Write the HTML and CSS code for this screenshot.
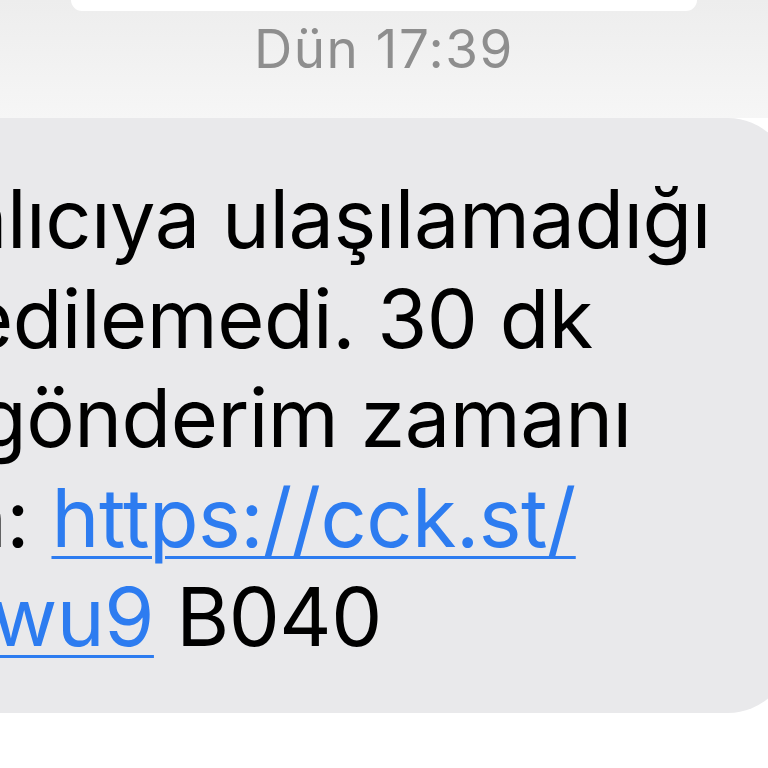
FILE: index.html
```html
<!DOCTYPE html>
<html lang="tr">
<head>
<meta charset="utf-8">
<link rel="stylesheet" href="styles.css">
</head>
<body>
<div class="screen">
  <div class="top">
    <div class="prev-bubble"></div>
    <div class="stamp">Dün 17:39</div>
  </div>
  <div class="bubble">
    <div class="line l1">alıcıya ulaşılamadığı</div>
    <div class="line l2">edilemedi. 30 dk</div>
    <div class="line l3">gönderim zamanı</div>
    <div class="line l4">n: <a class="link">https://cck.st/</a></div>
    <div class="line l5"><a class="link">wu9</a> B040</div>
  </div>
</div>
</body>
</html>
```
FILE: styles.css
```css
html, body {
  margin: 0;
  padding: 0;
}
body {
  width: 768px;
  height: 768px;
  overflow: hidden;
  background: #ffffff;
  font-family: "Inter", "Liberation Sans", sans-serif;
}
.screen {
  width: 768px;
  height: 768px;
  overflow: hidden;
  background: #ffffff;
}
.top {
  height: 118px;
  background: linear-gradient(#ededed, #f6f6f6);
  display: flex;
  flex-direction: column;
  align-items: center;
}
.prev-bubble {
  width: 626px;
  height: 11px;
  background: #ffffff;
  border-radius: 0 0 40px 40px;
}
.stamp {
  margin-top: 8px;
  font-size: 53px;
  line-height: 60px;
  color: #8e8e8e;
  letter-spacing: 1.5px;
}
.bubble {
  width: 860px;
  margin-left: -70px;
  height: 595px;
  background: #e9e9eb;
  border-radius: 0 62px 62px 0;
  box-sizing: border-box;
  padding-top: 52px;
  overflow: hidden;
}
.line {
  font-size: 81px;
  line-height: 99.5px;
  letter-spacing: -0.5px;
  color: #000000;
  white-space: nowrap;
}
.l1 { margin-left: 32px; }
.l2 { margin-left: 36px; }
.l3 { margin-left: 47px; }
.l4 { margin-left: 29px; }
.l5 { margin-left: 61px; }
.link {
  color: #2d7cf0;
  text-decoration: underline;
  text-decoration-thickness: 3px;
  text-underline-offset: 9px;
}
```
